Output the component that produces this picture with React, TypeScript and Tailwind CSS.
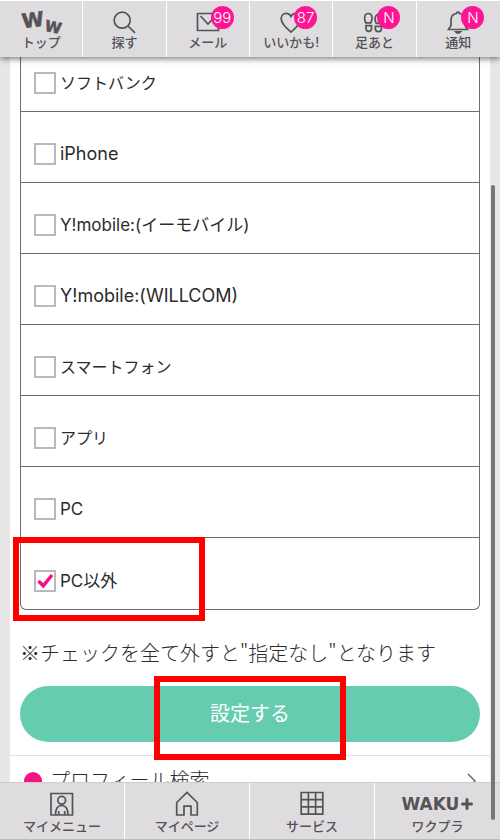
import { useState, type ReactNode } from "react";
import { clsx } from "clsx";

const carriers = [
  { id: "softbank", label: "ソフトバンク", size: "text-[16px]" },
  { id: "iphone", label: "iPhone", size: "text-[18px]" },
  { id: "emobile", label: "Y!mobile:(イーモバイル)", size: "text-[17px]" },
  { id: "willcom", label: "Y!mobile:(WILLCOM)", size: "text-[18px]" },
  { id: "smartphone", label: "スマートフォン", size: "text-[16px]" },
  { id: "app", label: "アプリ", size: "text-[16px]" },
  { id: "pc", label: "PC", size: "text-[17px]" },
  { id: "not-pc", label: "PC以外", size: "text-[17px]" },
];

function Line({ children }: { children: ReactNode }) {
  return (
    <svg
      viewBox="0 0 26 26"
      className="h-[26px] w-[26px]"
      fill="none"
      stroke="#555356"
      strokeWidth="1.7"
      aria-hidden="true"
    >
      {children}
    </svg>
  );
}

const WwLogo = () => (
  <svg viewBox="0 0 44 26" className="h-[26px] w-11 overflow-visible" fill="#555356" stroke="#555356" strokeWidth="0.6" aria-hidden="true">
    <g fontFamily="DejaVu Sans" fontWeight="bold">
      <text x="3" y="18" fontSize="20" transform="rotate(-7 13 12)">W</text>
      <text x="26" y="23" fontSize="15" transform="rotate(12 33 18)">W</text>
    </g>
  </svg>
);

const SearchIcon = () => (
  <Line>
    <circle cx="11.2" cy="11.2" r="8" />
    <path d="M17 17l7 6.800" />
  </Line>
);

const MailIcon = () => (
  <Line>
    <path d="M2.500 4.500h21v17h-21z" />
    <path d="M5.500 7l7.500 8L20.500 7" />
  </Line>
);

const HeartIcon = () => (
  <Line>
    <path d="M13 23C9 19.500 3.200 15 3.200 9.700 3.200 6.300 5.500 4.300 8.200 4.300c2.200 0 3.900 1.200 4.800 3.200.9-2 2.600-3.200 4.800-3.200 2.700 0 5 2 5 5.400 0 5.300-5.800 9.800-9.800 13.300z" />
  </Line>
);

const FootIcon = () => (
  <Line>
    <path d="M7.200 4.500c-2.400 0-3.600 2.300-3.600 5 0 2 .6 3 1.200 4.300h5c.6-1.500 1.300-2.700 1.300-4.500 0-2.800-1.300-4.800-3.900-4.800zM5 16.600h5.500v3a2.750 2.750 0 0 1-5.500 0z" />
    <path d="M17.500 5.500c-2.500 0-3.400 2.200-3.400 4.800 0 1.800.5 2.800 1.100 4.100h5c.6-1.300 1.200-2.300 1.200-4.100 0-2.700-1.300-4.800-3.900-4.800zM14.300 17.300h6.200v2.200a3.100 3.100 0 0 1-6.200 0z" />
  </Line>
);

const BellIcon = () => (
  <Line>
    <path d="M11.500 4.500c-3.600.6-5.500 3-5.500 6.500v5.500L3.500 20.500h19L20 16.500V11c0-3.500-1.900-5.900-5.500-6.500a1.500 1.500 0 0 0-3 0z" />
    <path d="M10.800 22.800h4.600l-1.200 1.200h-2.200z" fill="#555356" />
  </Line>
);

const PersonIcon = () => (
  <Line>
    <path d="M2 2.500h21.500V24H2z" />
    <circle cx="12.700" cy="9.300" r="3.900" />
    <path d="M6.500 24c0-6 2-9.500 6.200-9.500S19 18 19 24M9.700 24v-4M15.700 24v-4" />
  </Line>
);

const HomeIcon = () => (
  <Line>
    <path d="M2.700 24V11.500L13 1.500l10.300 10V24H17v-8.800H10V24z" />
  </Line>
);

const GridIcon = () => (
  <Line>
    <path d="M2.200 1.500h21.600v21.600H2.200zM9.400 1.500v21.600M16.600 1.500v21.600M2.200 8.700h21.600M2.200 15.900h21.600" />
  </Line>
);

const WakuLogo = () => (
  <span className="flex h-[26px] items-center font-['DejaVu_Sans'] text-[17px] leading-none font-bold">
    WAKU
    <svg viewBox="0 0 12 12" className="ml-0.5 h-3 w-3" stroke="#555356" strokeWidth="3" strokeLinecap="round" aria-hidden="true">
      <path d="M6 1.500v9M1.500 6h9" />
    </svg>
  </span>
);

const topItems = [
  { label: "トップ", icon: <WwLogo /> },
  { label: "探す", icon: <SearchIcon /> },
  { label: "メール", icon: <MailIcon />, badge: "99" },
  { label: "いいかも!", icon: <HeartIcon />, badge: "87" },
  { label: "足あと", icon: <FootIcon />, badge: "N" },
  { label: "通知", icon: <BellIcon />, badge: "N" },
];

const bottomItems = [
  { label: "マイメニュー", icon: <PersonIcon /> },
  { label: "マイページ", icon: <HomeIcon /> },
  { label: "サービス", icon: <GridIcon /> },
  { label: "ワクプラ", icon: <WakuLogo /> },
];

export default function App() {
  const [checked, setChecked] = useState<string[]>(["not-pc"]);

  const toggle = (id: string) =>
    setChecked((prev) => (prev.includes(id) ? prev.filter((c) => c !== id) : [...prev, id]));

  return (
    <div
      lang="ja"
      className="relative flex h-screen flex-col overflow-hidden bg-[#e9e6e8] font-['Inter','Noto_Sans_CJK_JP',sans-serif] text-[#2b2b2d]"
    >
      {/* Top menu */}
      <nav className="relative z-10 grid shrink-0 grid-cols-6 divide-x divide-white border-t border-white bg-[#dfdce0] shadow-[0_2px_6px_rgba(0,0,0,0.5)]">
        {topItems.map((item) => (
          <a
            key={item.label}
            href="#"
            className="relative flex h-14 flex-col items-center pt-2 text-[13px] leading-[15px] font-medium text-[#555356]"
          >
            {item.icon}
            {item.label}
            {item.badge && (
              <span className="absolute top-[5px] left-1/2 ml-[3px] flex h-[23px] w-[23px] items-center justify-center rounded-full bg-[#ff1493] text-[15px] font-light text-white">
                {item.badge}
              </span>
            )}
          </a>
        ))}
      </nav>

      {/* Scrolled content, partly under the menu */}
      <main className="mx-2.5 -mt-4 min-h-0 flex-1 overflow-hidden bg-white">
        <form onSubmit={(e) => e.preventDefault()}>
          <ul className="mx-2.5 divide-y divide-[#6d6c70] rounded-b-md border border-t-0 border-[#6d6c70]">
            {carriers.map((c) => (
              <li key={c.id} className="relative flex h-[71px] items-end px-[13px] pb-[17px]">
                <label htmlFor={c.id} className={clsx("flex items-center gap-1 leading-[22px]", c.size)}>
                  <span className="relative flex h-[22px] w-[22px]">
                    <input
                      id={c.id}
                      type="checkbox"
                      checked={checked.includes(c.id)}
                      onChange={() => toggle(c.id)}
                      className="peer h-full w-full appearance-none border-2 border-[#b9b9bd] bg-white"
                    />
                    <svg
                      viewBox="0 0 22 22"
                      className="pointer-events-none absolute inset-0 hidden peer-checked:block"
                      fill="none"
                      stroke="#f5147f"
                      strokeWidth="3.500"
                      aria-hidden="true"
                    >
                      <path d="M4.500 11l4.800 4.800L18 5" />
                    </svg>
                  </span>
                  {c.label}
                </label>
                {c.id === "not-pc" && (
                  <span className="pointer-events-none absolute -top-px -left-2 h-[84px] w-48 border-[6px] border-[#fe0000]" />
                )}
              </li>
            ))}
          </ul>

          <p className="mx-2.5 mt-7 font-['Noto_Sans_CJK_JP',sans-serif] text-[20px] leading-[30px] font-light">
            ※チェックを全て外すと"指定なし"となります
          </p>

          <div className="relative mx-2.5 mt-[18px]">
            <button type="submit" className="h-14 w-full rounded-full bg-[#66ccaf] text-[20px] text-white">
              設定する
            </button>
            <span className="pointer-events-none absolute -top-2.5 left-1/2 h-[84px] w-48 -translate-x-1/2 border-[6px] border-[#fe0000]" />
          </div>
        </form>

        <a href="#" className="mt-[13px] flex items-center border-t border-[#e2e0e3] px-3.5 pt-2.5 text-[20px] leading-[30px] font-light">
          <span className="mr-2 h-[18px] w-[18px] rounded-full bg-[#f5147f]" />
          プロフィール検索
          <svg viewBox="0 0 16 16" className="ml-auto -mr-1 h-4 w-4" fill="none" stroke="#6d6c70" strokeWidth="1.500" aria-hidden="true">
            <path d="M4 1l7 7-7 7" />
          </svg>
        </a>
      </main>

      {/* Bottom menu */}
      <nav className="grid shrink-0 grid-cols-4 divide-x divide-white border-t border-b border-t-[#cfccd0] border-b-[#bdbabe] bg-[#dfdce0]">
        {bottomItems.map((item) => (
          <a
            key={item.label}
            href="#"
            className="flex h-14 flex-col items-center gap-0.5 pt-2 text-[13px] leading-[15px] font-medium text-[#555356]"
          >
            {item.icon}
            {item.label}
          </a>
        ))}
      </nav>

      {/* Scroll thumb */}
      <span className="pointer-events-none absolute top-[185px] right-[5px] bottom-5 z-20 w-1 rounded-full bg-[#777578]" />
    </div>
  );
}
